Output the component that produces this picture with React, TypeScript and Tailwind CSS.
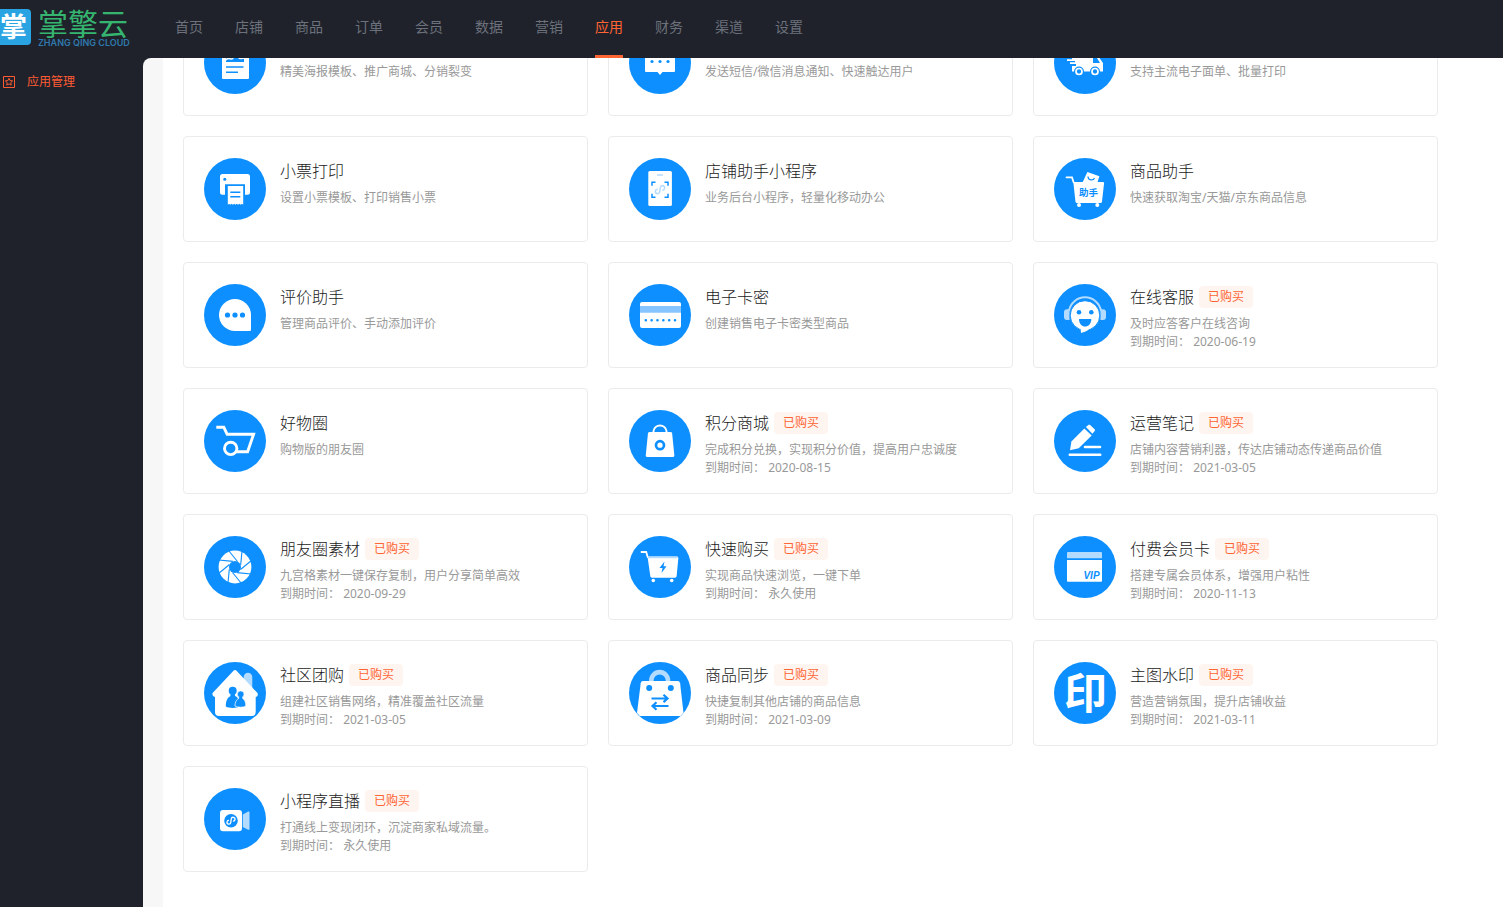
import type { ReactNode } from 'react';

const BLUE = '#0d8fff';
const PALE = '#b3dbff';

const navItems = ['首页', '店铺', '商品', '订单', '会员', '数据', '营销', '应用', '财务', '渠道', '设置'];
const activeNav = '应用';

interface AppItem {
  name?: string;
  desc: string;
  icon: ReactNode;
  expires?: string;
}

// Mini program "S" mark, drawn around 0,0
const miniProgram = 'M-2-.1a1.900 1.900 0 1 0 2 2v-3.800a1.900 1.900 0 1 1 2 2';

const icons = {
  poster: (
    <g fill="none" stroke={BLUE} strokeWidth="1.4">
      <rect x="18" y="14" width="27" height="33" rx="1" fill="#fff" stroke="none" />
      <rect x="22" y="19" width="18" height="11" fill={BLUE} stroke="none" />
      <path d="M22 28c3-4 5 1 7-2s3-4 5-1 4 1 6 1" stroke="#fff" />
      <path d="M22 35h17.500M22 40.300h12" />
    </g>
  ),
  message: (
    <g fill={BLUE}>
      <path d="M17 17h28a1 1 0 0 1 1 1v21a1 1 0 0 1-1 1H33.500L31 43l-2.500-3H17a1 1 0 0 1-1-1V18a1 1 0 0 1 1-1z" fill="#fff" />
      <circle cx="23" cy="29.500" r="1.600" />
      <circle cx="31" cy="29.500" r="1.600" />
      <circle cx="39" cy="29.500" r="1.600" />
    </g>
  ),
  truck: (
    <g fill="#fff">
      <path d="M18 20h19v4h7l5 7v8.500H18V34h4v-2h-6v-1.800h5V29h-8v-1.800h5z" />
      <path d="M39 26h4l3 5h-7z" fill={BLUE} />
      <circle cx="25" cy="39.500" r="3.700" stroke={BLUE} strokeWidth="2.600" />
      <circle cx="41" cy="39.500" r="3.700" stroke={BLUE} strokeWidth="2.600" />
      <circle cx="25" cy="39.500" r="3" fill={BLUE} stroke="#fff" strokeWidth="1.700" />
      <circle cx="41" cy="39.500" r="3" fill={BLUE} stroke="#fff" strokeWidth="1.700" />
    </g>
  ),
  printer: (
    <g fill="#fff">
      <path d="M18.500 16h25a2.500 2.500 0 0 1 2.500 2.500v15.700a2.500 2.500 0 0 1-2.500 2.500H41V26.300H21v10.400h-2.500a2.500 2.500 0 0 1-2.500-2.500V18.500a2.500 2.500 0 0 1 2.500-2.500z" />
      <circle cx="20.800" cy="21.300" r="1.500" fill={BLUE} />
      <path d="M23.800 28h15.400v18.700l-1.300-1-1.300 1-1.300-1-1.300 1-1.300-1-1.200 1-1.300-1-1.300 1-1.300-1-1.300 1-1.300-1-1.200 1z" />
      <path d="M26.300 34.300h10M26.300 38.700h10" stroke={BLUE} strokeWidth="1.400" />
    </g>
  ),
  phone: (
    <g fill="none">
      <rect x="19.300" y="13" width="23.600" height="35" rx="1.600" fill="#fff" />
      <path d="M28.500 17h5" stroke={PALE} strokeWidth="1.400" strokeLinecap="round" />
      <path d="M26.500 24.300H23v3.500M35.500 24.300H39v3.500M26.500 39.300H23v-3.500M35.500 39.300H39v-3.500" stroke={BLUE} strokeWidth="1.500" />
      <path d={miniProgram} transform="translate(31 31.700) rotate(8) scale(1.150)" stroke={PALE} strokeWidth="1.300" />
    </g>
  ),
  helperCart: (
    <g fill="#fff">
      <path d="M12.500 19.300H18l1.600 5" fill="none" stroke="#fff" strokeWidth="1.800" strokeLinecap="round" />
      <path d="M28.500 24.500l4.900-10.500 12 4.300-2 6.200z" />
      <path d="M34 18.500c0 4 5.500 4.500 6.500 1.500" fill="none" stroke={BLUE} strokeWidth="1.200" />
      <path d="M19.300 24h30.200l.6 1-2.200 19.200-1 .8H22.500l-1-.9z" />
      <circle cx="25" cy="47" r="2" />
      <circle cx="43.300" cy="47" r="2" />
      <text x="34.500" y="38.200" textAnchor="middle" fontSize="9.500" fontWeight="700" fill={BLUE}>助手</text>
    </g>
  ),
  comment: (
    <g fill={BLUE}>
      <path d="M31 15a16 16 0 0 1 16 16v14.800q0 1.200-1.200 1.200H31a16 16 0 0 1 0-32z" fill="#fff" />
      <circle cx="23.500" cy="31" r="2.600" />
      <circle cx="31" cy="31" r="2.600" />
      <circle cx="38.500" cy="31" r="2.600" />
    </g>
  ),
  card: (
    <g fill={BLUE}>
      <rect x="11" y="18" width="41" height="26" rx="2" fill="#fff" />
      <path d="M11 22h41v6.800H11z" fill="#86c5ff" />
      <path d="M16.800 36.300h30.500" stroke={BLUE} strokeWidth="2.600" strokeLinecap="round" strokeDasharray="0 5.840" />
    </g>
  ),
  service: (
    <g fill={BLUE}>
      <path d="M15 27a16.200 16.200 0 0 1 32 0" fill="none" stroke={PALE} strokeWidth="2" />
      <path d="M15.500 25.300V36H13a3 3 0 0 1-3-3v-4.700a3 3 0 0 1 3-3zM46.500 25.300V36H49a3 3 0 0 0 3-3v-4.700a3 3 0 0 0-3-3z" fill={PALE} />
      <circle cx="31" cy="31.500" r="14.800" fill="#fff" stroke={BLUE} strokeWidth="1" />
      <path d="M26.500 44l.5 5c3-.8 6-2 9-4.500z" fill="#fff" />
      <circle cx="25" cy="28.200" r="2.300" />
      <circle cx="37.300" cy="28.200" r="2.300" />
      <path d="M25 35h12.300c0 10-12.300 10-12.300 0z" />
    </g>
  ),
  circleCart: (
    <g fill="none" stroke="#fff" strokeWidth="2.900">
      <path d="M12.300 17.300h7.500l3.400 7h26.400l-6 17.400H32" />
      <circle cx="26.700" cy="38.400" r="6.200" />
    </g>
  ),
  pointsBag: (
    <g fill="#fff">
      <path d="M24.500 23v-2a6.600 6.600 0 0 1 13 0v2" fill="none" stroke="#fff" strokeWidth="1.900" />
      <path d="M20 22h22.200l.9.900 2.300 23-1 1.100H17.700l-1-1.100 2.300-23z" />
      <circle cx="31" cy="35.200" r="4" stroke={BLUE} strokeWidth="2.700" />
      <path d="M31 33l2.200 2.200-2.200 2.200-2.200-2.200z" />
    </g>
  ),
  note: (
    <g fill="#fff">
      <path d="M16 40.200l1.400-8.600 12.900-13.200 7.400 7-13 12.800z" />
      <path d="M31.900 17l2.800-2.200h1.200l5 4.700v1.300l-2.500 2.900z" />
      <path d="M31 37h15M15.800 44.700h30.400" stroke="#fff" strokeWidth="2.600" strokeLinecap="round" />
    </g>
  ),
  aperture: (
    <g>
      <circle cx="31" cy="31" r="16.400" fill="#fff" />
      <circle cx="31" cy="31" r="6" fill={BLUE} />
      {[0, 45, 90, 135, 180, 225, 270, 315].map((deg) => (
        <path key={deg} d="M24.500 14.500L33.500 25.500" stroke={BLUE} strokeWidth="1.100" transform={`rotate(${deg} 31 31)`} />
      ))}
    </g>
  ),
  quickCart: (
    <g fill="#fff">
      <path d="M12.500 16h4.700l1.500 5" fill="none" stroke="#fff" strokeWidth="1.800" strokeLinecap="round" />
      <path d="M18.500 20.500h29.700l1.200 1.300-1.800 18.700-1.300 1.200H22.700l-1.300-1z" />
      <path d="M19 20.500h29.500v1.700H19z" fill={PALE} />
      <circle cx="24.300" cy="44.500" r="1.800" />
      <circle cx="42.700" cy="44.500" r="1.800" />
      <path d="M35.500 25.500l-5 6.500h3l-1 5 5-6.700h-3z" fill={BLUE} />
    </g>
  ),
  vip: (
    <g fill="#fff">
      <path d="M14 16h33a1 1 0 0 1 1 1v5.300H13V17a1 1 0 0 1 1-1z" fill={PALE} />
      <path d="M13 24h35v20.700a1 1 0 0 1-1 1H14a1 1 0 0 1-1-1z" />
      <text x="37.500" y="43.300" textAnchor="middle" fontSize="10" fontWeight="700" fontStyle="italic" fontFamily="Liberation Sans, sans-serif" fill={BLUE}>VIP</text>
    </g>
  ),
  house: (
    <g fill="#fff">
      <path d="M39.700 24V15a4.300 4.300 0 0 1 8.600 0v13z" fill={PALE} />
      <path d="M29.700 8.600q1.300-1 2.600 0L53.500 31q1.200 3.200-1.800 4v15a4 4 0 0 1-4 4H15a4 4 0 0 1-4-4V35q-3.400-.8-2.400-4z" />
      <g fill={BLUE}>
        <circle cx="28.700" cy="28.700" r="4" />
        <path d="M26.700 31.500h4l.4 2.500c3 1.200 4.500 4.500 4.500 10.500-3 1.800-10.500 2-13.800 0 0-6 1.700-9 4.500-10.300z" />
        <path d="M35 34h3.400l.3 2.500c2 .9 3 3.500 3.200 7.500-2.300 1.600-8.400 1.600-11 0 .2-4 1.500-6.600 3.800-7.500z" stroke="#fff" strokeWidth=".7" />
        <circle cx="36.700" cy="32.200" r="3.300" stroke="#fff" strokeWidth=".6" />
        <path d="M35.300 34h2.800v3h-2.800z" />
      </g>
    </g>
  ),
  sync: (
    <g fill="none" stroke={BLUE} strokeWidth="2.200">
      <path d="M22.300 20.500v-2a8.300 8.300 0 0 1 16.700 0v2" stroke={PALE} strokeWidth="4.600" />
      <path d="M14 19h34.500q2.300 0 2.600 2.300L54.500 51l-3 3H10.800L8 51l3.700-29.700Q12 19 14 19z" fill="#fff" stroke="none" />
      <circle cx="20.200" cy="26" r="1.900" fill={BLUE} />
      <circle cx="41.800" cy="26" r="1.900" fill={BLUE} />
      <path d="M22.500 36.500H38M34.500 32.800l4 3.700-4 3.600M39.500 44H24M27.500 40.300l-4 3.700 4 3.700" />
    </g>
  ),
  watermark: (
    <text x="31.500" y="47" textAnchor="middle" fontSize="43" fontWeight="700" fill="#fff">印</text>
  ),
  live: (
    <g fill="#fff">
      <rect x="16" y="22" width="22" height="21.200" rx="3" />
      <path d="M38.800 26.500l5.400-2.900q1.300-.3 1.300 1v16.300q0 1.200-1.300.9l-5.400-2.900z" fill={PALE} />
      <circle cx="27" cy="32.700" r="6.800" fill={BLUE} />
      <path d={miniProgram} transform="translate(27 32.700) rotate(8)" fill="none" stroke="#fff" strokeWidth="1.300" />
    </g>
  ),
};

const apps: AppItem[] = [
  { desc: '精美海报模板、推广商城、分销裂变', icon: icons.poster },
  { desc: '发送短信/微信消息通知、快速触达用户', icon: icons.message },
  { desc: '支持主流电子面单、批量打印', icon: icons.truck },
  { name: '小票打印', desc: '设置小票模板、打印销售小票', icon: icons.printer },
  { name: '店铺助手小程序', desc: '业务后台小程序，轻量化移动办公', icon: icons.phone },
  { name: '商品助手', desc: '快速获取淘宝/天猫/京东商品信息', icon: icons.helperCart },
  { name: '评价助手', desc: '管理商品评价、手动添加评价', icon: icons.comment },
  { name: '电子卡密', desc: '创建销售电子卡密类型商品', icon: icons.card },
  { name: '在线客服', desc: '及时应答客户在线咨询', icon: icons.service, expires: '2020-06-19' },
  { name: '好物圈', desc: '购物版的朋友圈', icon: icons.circleCart },
  { name: '积分商城', desc: '完成积分兑换，实现积分价值，提高用户忠诚度', icon: icons.pointsBag, expires: '2020-08-15' },
  { name: '运营笔记', desc: '店铺内容营销利器，传达店铺动态传递商品价值', icon: icons.note, expires: '2021-03-05' },
  { name: '朋友圈素材', desc: '九宫格素材一键保存复制，用户分享简单高效', icon: icons.aperture, expires: '2020-09-29' },
  { name: '快速购买', desc: '实现商品快速浏览，一键下单', icon: icons.quickCart, expires: '永久使用' },
  { name: '付费会员卡', desc: '搭建专属会员体系，增强用户粘性', icon: icons.vip, expires: '2020-11-13' },
  { name: '社区团购', desc: '组建社区销售网络，精准覆盖社区流量', icon: icons.house, expires: '2021-03-05' },
  { name: '商品同步', desc: '快捷复制其他店铺的商品信息', icon: icons.sync, expires: '2021-03-09' },
  { name: '主图水印', desc: '营造营销氛围，提升店铺收益', icon: icons.watermark, expires: '2021-03-11' },
  { name: '小程序直播', desc: '打通线上变现闭环，沉淀商家私域流量。', icon: icons.live, expires: '永久使用' },
];

function Logo() {
  return (
    <a href="#" className="flex w-[175px] shrink-0 items-center gap-[7px] pb-1">
      <span className="flex h-9 w-[31px] items-center justify-center overflow-hidden rounded-r-sm bg-[#2aa3e3] pr-1 text-[27px] font-bold text-white">
        掌
      </span>
      <span className="flex flex-col">
        <span className="font-['Noto_Sans_CJK_SC',sans-serif] text-[30px] leading-[30px] text-[#35b56f]">掌擎云</span>
        <span className="font-['Inter',sans-serif] text-[9px] leading-[11px] font-semibold text-[#2f79ad]">ZHANG QING CLOUD</span>
      </span>
    </a>
  );
}

function Header() {
  return (
    <header className="relative z-10 flex h-[58px] shrink-0 bg-[#1f222b]">
      <Logo />
      <nav className="flex gap-8">
        {navItems.map((item) => (
          <a
            key={item}
            href="#"
            className={`flex items-center border-b-3 pb-0.5 text-sm ${
              item === activeNav ? 'border-[#ff6433] text-[#ff6433]' : 'border-transparent text-[#6c717b]'
            }`}
          >
            {item}
          </a>
        ))}
      </nav>
    </header>
  );
}

function Sidebar() {
  return (
    <aside className="w-[143px] shrink-0 pt-3">
      <a href="#" className="flex h-6 items-center gap-3 pl-[3px] text-xs text-[#ff5c33]">
        <svg viewBox="0 0 12 12" className="size-3" fill="none" stroke="currentColor">
          <path d="M.5.500h11v11H.500z" />
          <path d="M6 2.300l1.100 2.300 2.500.3-1.800 1.700.4 2.500L6 7.900 3.800 9.100l.4-2.500-1.800-1.700 2.500-.3z" />
        </svg>
        应用管理
      </a>
    </aside>
  );
}

function AppCard({ app }: { app: AppItem }) {
  return (
    <article className="flex min-h-[106px] gap-[14px] rounded border border-[#ebebeb] px-5 pt-[21px] pb-4">
      <svg viewBox="0 0 62 62" className="size-[62px] shrink-0">
        <circle cx="31" cy="31" r="31" fill={BLUE} />
        {app.icon}
      </svg>
      <div className="min-w-0 pt-[2px] text-xs leading-[18px] text-[#999]">
        <div className="mb-[7px] flex h-[22px] items-center gap-[5px]">
          {app.name && <h3 className="text-base font-light text-[#1a1a1a]">{app.name}</h3>}
          {app.expires && (
            <span className="rounded bg-[#fff5f0] px-[9px] py-0.5 text-[#ff6433]">已购买</span>
          )}
        </div>
        <p>{app.desc}</p>
        {app.expires && <p>到期时间： {app.expires}</p>}
      </div>
    </article>
  );
}

export default function App() {
  return (
    <div className="flex h-screen flex-col overflow-hidden bg-[#1f222b] font-['Noto_Sans','Noto_Sans_CJK_SC',sans-serif]">
      <Header />
      <div className="flex min-h-0 flex-1">
        <Sidebar />
        <main className="min-w-0 flex-1 overflow-hidden rounded-tl-lg bg-[#f7f7f7] pl-5">
          {/* The list is scrolled down a little under the header */}
          <section className="-mt-12 min-h-full bg-white pr-[65px] pb-24 pl-5">
            <div className="grid grid-cols-3 gap-5">
              {apps.map((app) => (
                <AppCard key={app.desc} app={app} />
              ))}
            </div>
          </section>
        </main>
      </div>
    </div>
  );
}
